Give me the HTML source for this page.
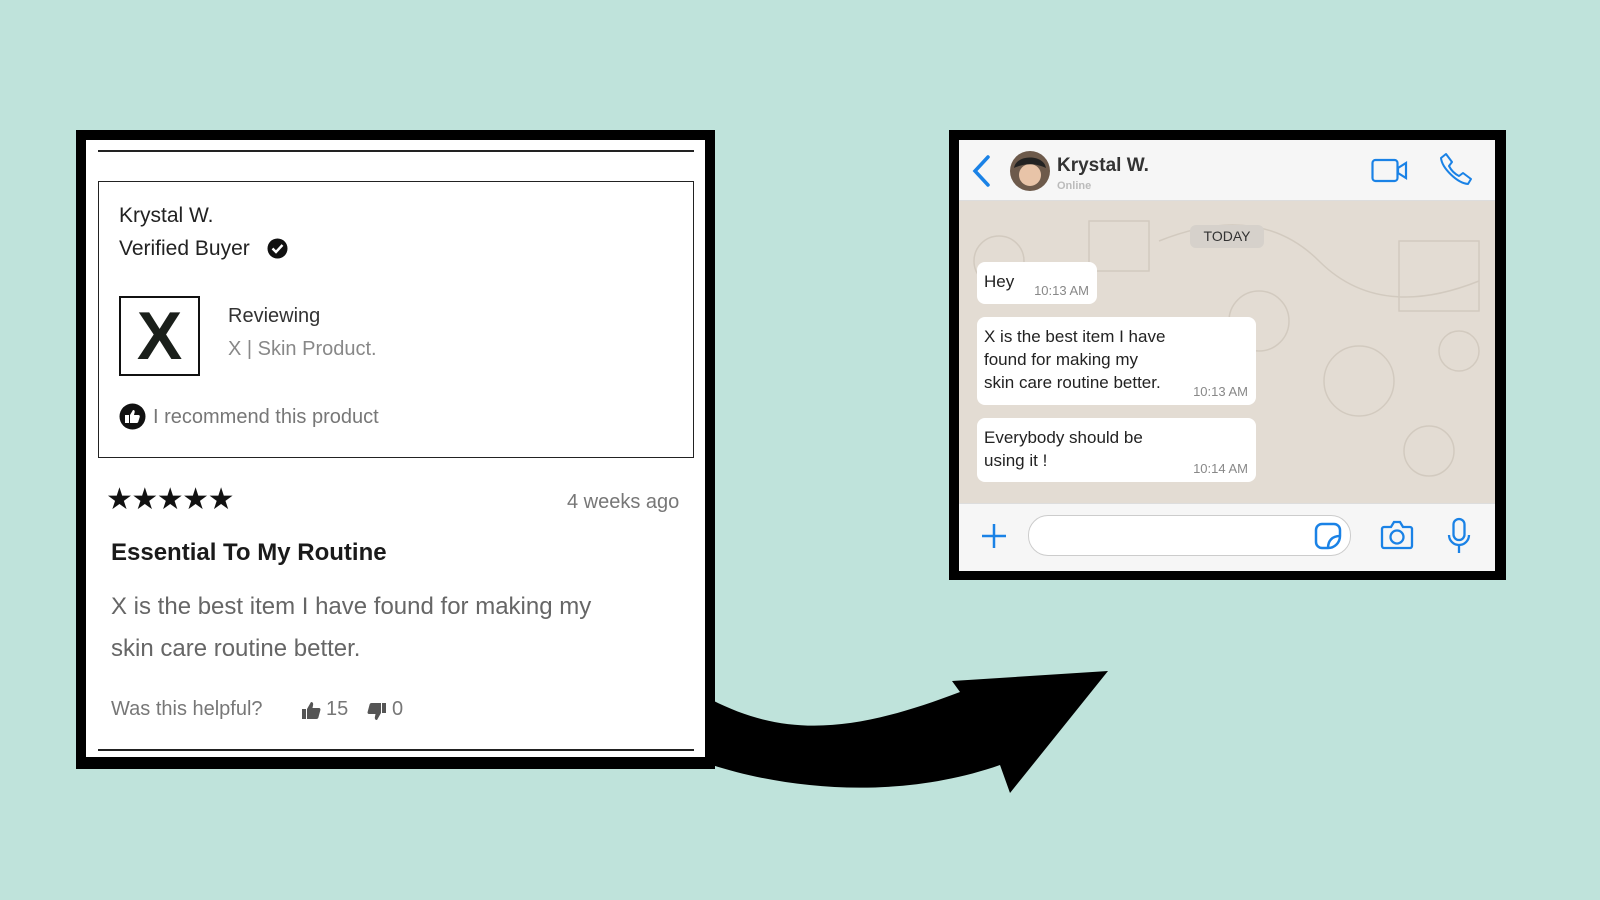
<!DOCTYPE html>
<html><head><meta charset="utf-8"><style>
*{margin:0;padding:0;box-sizing:border-box}
body{width:1600px;height:900px;background:#bfe3db;position:relative;overflow:hidden;font-family:"Liberation Sans",sans-serif}
.a{position:absolute;white-space:nowrap}
.card{position:absolute;left:76px;top:130px;width:639px;height:639px;background:#fff;border:10px solid #000;border-bottom-width:12px}
.bub{position:absolute;background:#fff;border-radius:8px;font-size:17px;color:#222;line-height:23px;padding:8px 7px}
.tm{position:absolute;right:8px;bottom:6px;font-size:13px;color:#888;line-height:14px}
</style></head><body>
<svg class="a" style="left:0;top:0" width="1600" height="900">
<path d="M712,700 C790,740 860,730 960,692 L952,681 L1108,671 L1010,793 L1000,765 C900,800 790,790 712,765 Z" fill="#000"/>
</svg>
<div class="card"></div>
<div class="a" style="left:98px;top:150px;width:596px;height:2px;background:#222"></div>
<div class="a" style="left:98px;top:181px;width:596px;height:277px;border:1.5px solid #222"></div>
<div class="a" style="left:119px;top:204px;font-size:21px;color:#222">Krystal W.</div>
<div class="a" style="left:119px;top:237px;font-size:21px;color:#222">Verified Buyer</div>
<svg class="a" style="left:267px;top:238px" width="21" height="21"><circle cx="10.5" cy="10.5" r="10" fill="#111"/><path d="M5.5 10.5l3.5 3.5 6.5-7" stroke="#fff" stroke-width="2.4" fill="none"/></svg>
<div class="a" style="left:119px;top:296px;width:81px;height:80px;border:2px solid #111;text-align:center;font-size:68px;font-weight:bold;line-height:76px;color:#1a1f1a">X</div>
<div class="a" style="left:228px;top:305px;font-size:20px;color:#333">Reviewing</div>
<div class="a" style="left:228px;top:338px;font-size:20px;color:#888">X | Skin Product.</div>
<svg class="a" style="left:119px;top:403px" width="27" height="27"><circle cx="13.5" cy="13.5" r="13" fill="#111"/><path d="M6 12h4v8H6zM11 12l3-5c1.5 0 2 1 1.6 2.5L15 12h4.5c1 0 1.5 1 1.2 2l-1.5 5c-.3.8-1 1-1.8 1H11z" fill="#fff"/></svg>
<div class="a" style="left:153px;top:406px;font-size:20px;color:#777">I recommend this product</div>
<div class="a" style="left:106px;top:482px;font-size:30px;letter-spacing:-1.5px;color:#111">★★★★★</div>
<div class="a" style="left:567px;top:491px;font-size:20px;color:#777">4 weeks ago</div>
<div class="a" style="left:111px;top:539px;font-size:24px;font-weight:bold;color:#1a1a1a">Essential To My Routine</div>
<div class="a" style="left:111px;top:586px;font-size:24px;color:#666;line-height:42px">X is the best item I have found for making my<br>skin care routine better.</div>
<div class="a" style="left:111px;top:698px;font-size:20px;color:#777">Was this helpful?</div>
<svg class="a" style="left:301px;top:701px" width="20" height="19"><path d="M1 8h4v10H1zM6 8l4-7c2 0 2.5 1.5 2 3.5L11.5 7H18c1 0 1.7 1 1.4 2l-2 7.5c-.3 1-1 1.5-2 1.5H6z" fill="#555"/></svg>
<div class="a" style="left:326px;top:698px;font-size:20px;color:#777">15</div>
<svg class="a" style="left:367px;top:702px" width="20" height="19"><g transform="rotate(180 10 9.5)"><path d="M1 8h4v10H1zM6 8l4-7c2 0 2.5 1.5 2 3.5L11.5 7H18c1 0 1.7 1 1.4 2l-2 7.5c-.3 1-1 1.5-2 1.5H6z" fill="#555"/></g></svg>
<div class="a" style="left:392px;top:698px;font-size:20px;color:#777">0</div>
<div class="a" style="left:98px;top:749px;width:596px;height:2px;background:#222"></div>

<div class="a" style="left:949px;top:130px;width:557px;height:450px;background:#000"></div>
<div class="a" style="left:959px;top:140px;width:536px;height:61px;background:#f6f6f6;border-bottom:1px solid #ddd"></div>
<div class="a" style="left:959px;top:201px;width:536px;height:302px;background:#e3dcd3"></div>
<svg class="a" style="left:959px;top:201px;opacity:.35" width="536" height="302" fill="none" stroke="#b5aa9c" stroke-width="1.5">
<circle cx="40" cy="60" r="25"/><circle cx="300" cy="120" r="30"/><circle cx="400" cy="180" r="35"/><rect x="130" y="20" width="60" height="50"/><rect x="440" y="40" width="80" height="70"/><path d="M200 40 Q300 0 360 60 T520 80"/><circle cx="90" cy="250" r="30"/><circle cx="470" cy="250" r="25"/><path d="M20 150 L60 130 L70 180Z"/><circle cx="500" cy="150" r="20"/></svg>
<div class="a" style="left:959px;top:503px;width:536px;height:68px;background:#f6f6f6;border-top:1px solid #ddd"></div>
<svg class="a" style="left:970px;top:154px" width="22" height="34"><path d="M18 3L5 17l13 14" stroke="#1a82e6" stroke-width="3.5" fill="none" stroke-linecap="round"/></svg>
<svg class="a" style="left:1009px;top:150px" width="42" height="42"><circle cx="21" cy="21" r="20" fill="#6d5a4b"/><circle cx="21" cy="25" r="11" fill="#e8c4a8"/><path d="M5 18c2-14 30-14 32 0-10-5-22-5-32 0z" fill="#222"/></svg>
<div class="a" style="left:1057px;top:155px;font-size:19px;font-weight:bold;color:#333">Krystal W.</div>
<div class="a" style="left:1057px;top:180px;font-size:11px;font-weight:bold;color:#bbb">Online</div>
<svg class="a" style="left:1371px;top:158px" width="38" height="25"><rect x="1.5" y="2" width="25" height="21" rx="3" stroke="#1a82e6" stroke-width="2.2" fill="none"/><path d="M27 10l8-5v15l-8-5z" stroke="#1a82e6" stroke-width="2.2" fill="none"/></svg>
<svg class="a" style="left:1439px;top:152px" width="34" height="34"><path d="M7 2l6 8-3 4c2 4 6 8 10 10l4-3 8 6-3 5C18 31 3 16 2 6z" stroke="#1a82e6" stroke-width="2" fill="none" stroke-linejoin="round"/></svg>
<div class="a" style="left:1190px;top:225px;width:74px;height:23px;border-radius:6px;background:#d6d1cb;font-size:14px;color:#333;text-align:center;line-height:23px">TODAY</div>
<div class="bub" style="left:977px;top:262px;width:120px;height:42px">Hey<span class="tm">10:13 AM</span></div>
<div class="bub" style="left:977px;top:317px;width:279px;height:88px">X is the best item I have<br>found for making my<br>skin care routine better.<span class="tm">10:13 AM</span></div>
<div class="bub" style="left:977px;top:418px;width:279px;height:64px">Everybody should be<br>using it !<span class="tm">10:14 AM</span></div>
<svg class="a" style="left:980px;top:522px" width="28" height="28"><path d="M14 2v24M2 14h24" stroke="#1a82e6" stroke-width="2.5"/></svg>
<div class="a" style="left:1028px;top:515px;width:323px;height:41px;border:1.5px solid #ccc;border-radius:20px;background:#fff"></div>
<svg class="a" style="left:1314px;top:522px" width="28" height="28"><path d="M8 2h12a6 6 0 0 1 6 6v6A12 12 0 0 1 14 26H8a6 6 0 0 1-6-6V8a6 6 0 0 1 6-6zM14 26c0-7 4-12 12-12" stroke="#1a82e6" stroke-width="2.5" fill="none"/></svg>
<svg class="a" style="left:1380px;top:519px" width="34" height="32"><path d="M4 8h7l3-5h6l3 5h7a2 2 0 0 1 2 2v17a2 2 0 0 1-2 2H4a2 2 0 0 1-2-2V10a2 2 0 0 1 2-2z" stroke="#1a82e6" stroke-width="2.3" fill="none"/><circle cx="17" cy="18" r="6.5" stroke="#1a82e6" stroke-width="2.3" fill="none"/></svg>
<svg class="a" style="left:1446px;top:517px" width="26" height="38"><rect x="7.5" y="2" width="11" height="21" rx="5.5" stroke="#1a82e6" stroke-width="2.3" fill="none"/><path d="M3 18a10 10 0 0 0 20 0M13 28v8" stroke="#1a82e6" stroke-width="2.3" fill="none"/></svg>
</body></html>
